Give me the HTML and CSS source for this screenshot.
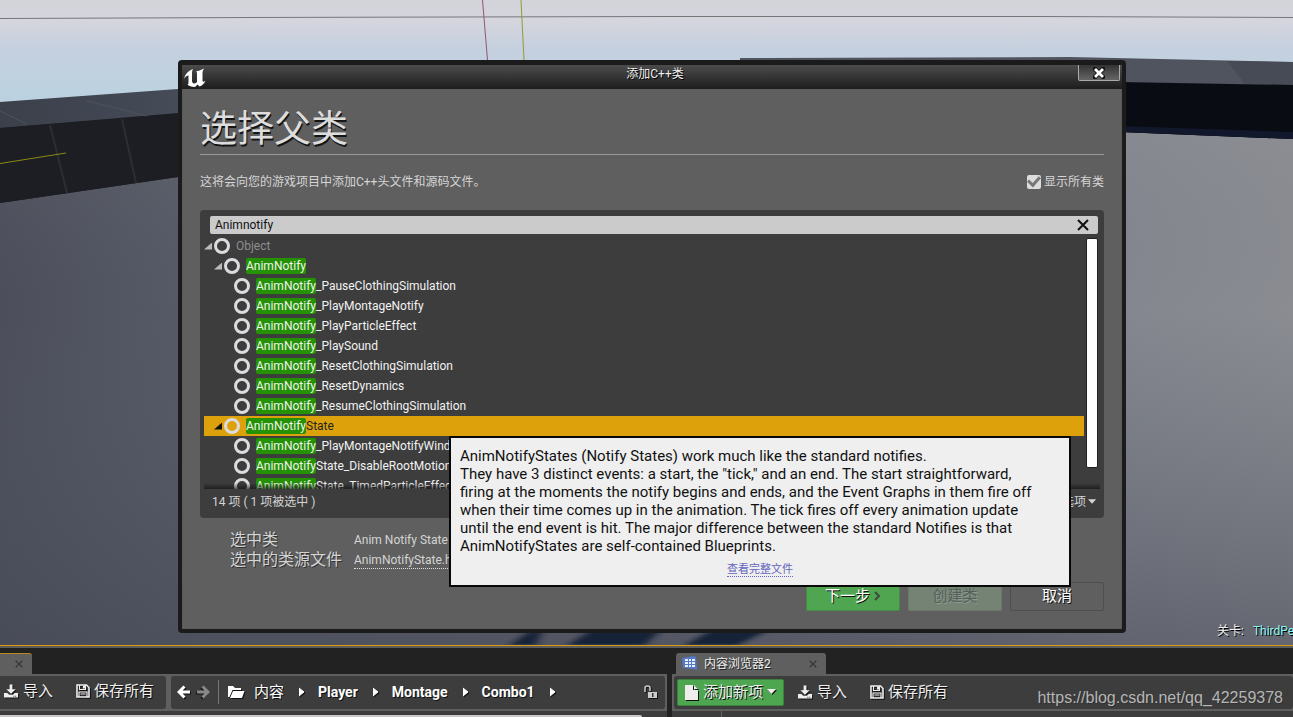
FILE: index.html
```html
<!DOCTYPE html>
<html lang="zh-CN">
<head>
<meta charset="utf-8">
<title>添加C++类</title>
<link rel="stylesheet" href="styles.css">
</head>
<body>
<svg class="defs" aria-hidden="true">
  <symbol id="i-import" viewBox="0 0 16 14"><path d="M6 0h3v5h3.500L7.500 10 2.500 5H6z"/><path d="M0 9h3.500l2 2h4l2-2H15v5H0z"/><path d="M10 12h1v1h-1zM12 12h1v1h-1z" fill="#333"/></symbol>
  <symbol id="i-save" viewBox="0 0 14 14"><path d="M1 1h9.500L13 3.500V13H1z" fill="none" stroke="currentColor" stroke-width="1.600"/><path d="M3.500 1v4.500h6V1M3 13V8h8v5" fill="none" stroke="currentColor" stroke-width="1.200"/><path d="M7 1.500h2v3H7zM4.500 9.500h5v1h-5z"/></symbol>
  <symbol id="i-arrow" viewBox="0 0 14 14"><path d="M13 7H3M7.500 1.500 2 7l5.500 5.500" fill="none" stroke="currentColor" stroke-width="3"/></symbol>
  <symbol id="i-x" viewBox="0 0 12 12"><path d="M1 1l10 10M11 1 1 11" fill="none" stroke="currentColor" stroke-width="2"/></symbol>
  <symbol id="i-crumb" viewBox="0 0 6 10"><path d="M0 1 5 5 0 9z" stroke="currentColor" stroke-linejoin="round"/></symbol>
  <symbol id="i-down" viewBox="0 0 10 6"><path d="M0 0h9L4.500 5z"/></symbol>
</svg>
<main class="editor">
  <section class="viewport">
    <svg class="scene" viewBox="0 0 1293 645" preserveAspectRatio="none" aria-hidden="true">
      <defs>
        <linearGradient id="sky" x2="0" y2="1"><stop offset="0" stop-color="#d3d4da"/><stop offset=".2" stop-color="#d4d5dd"/><stop offset=".45" stop-color="#c5d0df"/><stop offset="1" stop-color="#b9d2e0"/></linearGradient>
        <linearGradient id="floor"><stop offset="0" stop-color="#4c4f5b"/><stop offset=".14" stop-color="#565a66"/><stop offset=".5" stop-color="#646773"/><stop offset=".87" stop-color="#84878f"/><stop offset="1" stop-color="#8a8c92"/></linearGradient>
        <linearGradient id="shade" x2="0" y2="1"><stop offset="0" stop-color="#999" stop-opacity=".12"/><stop offset=".35" stop-color="#555b68" stop-opacity="0"/><stop offset="1" stop-color="#454855" stop-opacity=".55"/></linearGradient>
        <linearGradient id="top"><stop offset="0" stop-color="#3b404b"/><stop offset="1" stop-color="#454b57"/></linearGradient>
        <filter id="soft"><feGaussianBlur stdDeviation="4 1"/></filter>
      </defs>
      <rect width="1293" height="110" fill="url(#sky)"/>
      <path d="M0 203 178 177 1125 132 1293 139V645H0z" fill="url(#floor)"/>
      <path d="M0 203 178 177 1125 132 1293 139V645H0z" fill="url(#shade)"/>
      <path d="M0 102 178 89v25L0 128z" fill="url(#top)"/>
      <path d="M0 128 178 113v64L0 203z" fill="#1d1e23"/>
      <path d="M0 111 27 124M87 101 147 116" stroke="#4d525d" fill="none"/>
      <path d="M50 125 67 193M122 119 136 183" stroke="#2c2e35" stroke-width="2" fill="none"/>
      <path d="M0 163.500 66 153" stroke="#8a8a10"/>
      <path d="M740 58 1070 57 1293 62V86L1125 83 740 75z" fill="#50545e"/>
      <path d="M1227 61 1293 62V86L1245 84z" fill="#474b56"/>
      <path d="M1120 82 1293 85V139L1120 132z" fill="#090c12"/>
      <path d="M1120 126 1293 132V139L1120 132z" fill="#12182b"/>
      <path d="M0 18.500 252 17.500 660 16.500H1040L1293 17.500" stroke="#77777a" fill="none"/>
      <path d="M482.500 0 487.500 60" stroke="#8b5872"/><path d="M521 0 524 60" stroke="#969832"/>
      <path d="M510 645 530 631H542L536 645zM568 645 590 631H660L645 645zM685 645 710 631H767L738 645z" fill="#182039" filter="url(#soft)"/>
    </svg>
    <p class="level"><span>关卡:</span><span class="level-name">ThirdPersonExampleMap</span></p>
  </section>

  <section class="docks">
    <div class="dock dock-left">
      <div class="tabs"><div class="tab tab-cut"><button class="tab-close" aria-label="关闭"><svg width="8" height="8"><use href="#i-x"/></svg></button></div></div>
      <div class="bars">
        <div class="bar bar-file">
          <button class="tool"><svg width="15" height="14"><use href="#i-import"/></svg>导入</button>
          <button class="tool"><svg width="14" height="14"><use href="#i-save"/></svg>保存所有</button>
        </div>
        <nav class="bar bar-path">
          <button class="nav" aria-label="后退"><svg width="14" height="14"><use href="#i-arrow"/></svg></button>
          <button class="nav nav-off" aria-label="前进"><svg class="flip" width="14" height="14"><use href="#i-arrow"/></svg></button>
          <span class="rule"></span>
          <svg class="folder" width="17" height="14" viewBox="0 0 17 14"><path d="M0 12V1h5l2 2h6v2H4.500L1.500 12zM5 6h11.500L14 13H2z"/></svg>
          <a class="crumb crumb-root" href="#">内容</a><svg class="sep" width="6" height="10"><use href="#i-crumb"/></svg>
          <a class="crumb" href="#">Player</a><svg class="sep" width="6" height="10"><use href="#i-crumb"/></svg>
          <a class="crumb" href="#">Montage</a><svg class="sep" width="6" height="10"><use href="#i-crumb"/></svg>
          <a class="crumb" href="#">Combo1</a><svg class="sep" width="6" height="10"><use href="#i-crumb"/></svg>
          <button class="nav lock" aria-label="锁定"><svg width="14" height="14" viewBox="0 0 14 14"><path d="M1 7V3Q1 1 3.500 1T6 3V6" fill="none" stroke="currentColor" stroke-width="1.500"/><path d="M4 7h9v6H4z"/><path d="M8 8h1.500v4H8z" fill="#333"/></svg></button>
        </nav>
      </div>
      <div class="next"><span class="next-line"></span></div>
    </div>
    <div class="dock dock-right">
      <div class="tabs">
        <div class="tab tab-full">
          <svg width="16" height="15" viewBox="0 0 16 15"><path d="M0 2 12 0 14 1 15 14 12 13 1 12z" fill="#5578c8"/><path d="M3 3h3v2H3zM7 3h2v2H7zM10 3h3v2h-3zM3 6h3v2H3zM7 6h2v2H7zM10 6h3v2h-3zM3 9h3v2H3zM7 9h2v2H7zM10 9h3v2h-3z" fill="#e8efff"/></svg>
          <span class="tab-name">内容浏览器2</span>
          <button class="tab-close" aria-label="关闭"><svg width="8" height="8"><use href="#i-x"/></svg></button>
        </div>
      </div>
      <div class="bars">
        <div class="bar bar-add">
          <button class="tool add"><svg width="14" height="15" viewBox="0 0 14 15"><path d="M0 0h8v5h5v10H0zM9 0l4 4H9z"/></svg>添加新项<svg width="10" height="6"><use href="#i-down"/></svg></button>
          <button class="tool"><svg width="15" height="14"><use href="#i-import"/></svg>导入</button>
          <button class="tool"><svg width="14" height="14"><use href="#i-save"/></svg>保存所有</button>
        </div>
      </div>
      <div class="next"><span class="next-split"></span></div>
    </div>
  </section>

  <section class="dialog" role="dialog" aria-labelledby="dialog-title">
    <header class="titlebar">
      <svg class="logo" width="24" height="20" viewBox="0 0 24 20"><path d="M1 11C2 6 5 3 10 1c-1 2-1 3-1 5v7c0 1.500 1 2.500 2 2.500s2-.5 3-1.500V6c0-1.500 0-2-1-2.500C15 3 18 2 21 0.500c-1 1.500-1.500 3-1.500 5v7c0 1.500 1 1.500 3 .2C21 16 19 17.500 16.500 18.500L14.500 16.500 12 19C8 19 6 18 4.500 16.500 5.500 16 5.500 15.500 5.500 14V7.500C3.500 7.500 2.200 9 1 11z"/></svg>
      <h1 id="dialog-title" class="title">添加C++类</h1>
      <button class="close" aria-label="关闭"><svg width="12" height="12" viewBox="0 0 12 12"><path d="M2 2l8 8M10 2 2 10" stroke="#111" stroke-width="4.500" stroke-linecap="square"/><path d="M2 2l8 8M10 2 2 10" stroke="#fff" stroke-width="2.800"/></svg></button>
    </header>
    <div class="body">
      <h2 class="heading">选择父类</h2>
      <div class="intro">
        <p>这将会向您的游戏项目中添加C++头文件和源码文件。</p>
        <label class="check"><input type="checkbox" checked>显示所有类</label>
      </div>
      <div class="panel">
        <div class="search">
          <input type="text" value="Animnotify" aria-label="搜索">
          <button aria-label="清除"><svg width="12" height="12"><use href="#i-x"/></svg></button>
        </div>
        <div class="list">
          <ul class="tree">
            <li class="row"><i class="twist"></i><i class="ring"></i><span class="dim">Object</span></li>
            <li class="row level-1"><i class="twist"></i><i class="ring"></i><span><mark>AnimNotify</mark></span></li>
            <li class="row level-2"><i class="ring"></i><span><mark>AnimNotify</mark>_PauseClothingSimulation</span></li>
            <li class="row level-2"><i class="ring"></i><span><mark>AnimNotify</mark>_PlayMontageNotify</span></li>
            <li class="row level-2"><i class="ring"></i><span><mark>AnimNotify</mark>_PlayParticleEffect</span></li>
            <li class="row level-2"><i class="ring"></i><span><mark>AnimNotify</mark>_PlaySound</span></li>
            <li class="row level-2"><i class="ring"></i><span><mark>AnimNotify</mark>_ResetClothingSimulation</span></li>
            <li class="row level-2"><i class="ring"></i><span><mark>AnimNotify</mark>_ResetDynamics</span></li>
            <li class="row level-2"><i class="ring"></i><span><mark>AnimNotify</mark>_ResumeClothingSimulation</span></li>
            <li class="row level-1 selected"><i class="twist"></i><i class="ring"></i><span><mark>AnimNotify</mark>State</span></li>
            <li class="row level-2"><i class="ring"></i><span><mark>AnimNotify</mark>_PlayMontageNotifyWindow</span></li>
            <li class="row level-2"><i class="ring"></i><span><mark>AnimNotify</mark>State_DisableRootMotion</span></li>
            <li class="row level-2"><i class="ring"></i><span><mark>AnimNotify</mark>State_TimedParticleEffect</span></li>
          </ul>
          <div class="track"><div class="thumb"></div></div>
        </div>
        <div class="status"><span>14 项 ( 1 项被选中 )</span><button class="options">视图选项<svg width="9" height="6"><use href="#i-down"/></svg></button></div>
      </div>
      <dl class="facts">
        <dt>选中类</dt><dd>Anim Notify State</dd>
        <dt>选中的类源文件</dt><dd><a href="#">AnimNotifyState.h</a></dd>
      </dl>
      <div class="actions">
        <button class="btn go">下一步<svg width="7" height="10" viewBox="0 0 7 10"><path d="M1 1l4 4-4 4" fill="none" stroke="#3c4a3c" stroke-width="2"/></svg></button>
        <button class="btn off" disabled>创建类</button>
        <button class="btn">取消</button>
      </div>
    </div>
    <aside class="tooltip" role="tooltip">
      <p>AnimNotifyStates (Notify States) work much like the standard notifies.<br>They have 3 distinct events: a start, the "tick," and an end. The start straightforward,<br>firing at the moments the notify begins and ends, and the Event Graphs in them fire off<br>when their time comes up in the animation. The tick fires off every animation update<br>until the end event is hit. The major difference between the standard Notifies is that<br>AnimNotifyStates are self-contained Blueprints.</p>
      <a href="#">查看完整文件</a>
    </aside>
  </section>
  <p class="watermark">https://blog.csdn.net/qq_42259378</p>
</main>
</body>
</html>
```
FILE: styles.css
```css
* { box-sizing: border-box; }
body { margin: 0; background: #222; color: #eee; font: 12px/16px Roboto, "Noto Sans CJK SC", sans-serif; }
p, h1, h2, ul, dl, dd { margin: 0; padding: 0; font-weight: 400; }
button { border: 0; padding: 0; background: none; color: inherit; font: inherit; }
svg { display: block; flex: none; fill: currentColor; }
.defs { position: absolute; width: 0; height: 0; }

.editor { position: relative; display: flex; flex-direction: column; height: 100vh; overflow: hidden; }
.viewport { position: relative; flex: 1; min-height: 0; border-bottom: 1px solid #d99c12; }
.scene { width: 100%; height: 100%; }
.level { position: absolute; right: 0; bottom: 6px; display: flex; gap: 9px; width: 76px; overflow: hidden; white-space: nowrap; text-shadow: 1px 1px #000; }
.level-name { color: #8ff5f2; }

/* Docked content browsers */
.docks { display: flex; gap: 5px; border-top: 2px solid #5c5c5c; }
.dock { min-width: 0; }
.dock-left { flex: 667; }
.dock-right { flex: 621; }
.tabs { display: flex; align-items: flex-end; height: 26px; padding-left: 4px; }
.dock-left .tabs { padding-left: 0; }
.tab { display: flex; align-items: center; height: 21px; padding: 0 9px 0 6px; background: #5f5f5f; border-radius: 3px 3px 0 0; text-shadow: 1px 1px #222; }
.tab-cut { justify-content: flex-end; width: 32px; border-top: 1px solid #b58a1d; border-top-left-radius: 0; }
.tab-full { width: 150px; gap: 6px; }
.tab-name { flex: 1; }
.tab-close { color: #393939; }
.bars { display: flex; gap: 5px; padding: 2px; background: #5f5f5f; }
.dock-left .bars { padding-left: 0; }
.dock-right .bars { padding-right: 0; }
.bar { display: flex; align-items: center; height: 33px; padding-bottom: 2px; background: #3d3d3d; border-radius: 3px; white-space: nowrap; }
.bar-file { gap: 23px; width: 166px; padding-left: 4px; border-radius: 0 3px 3px 0; }
.bar-path { flex: 1; padding-left: 6px; }
.bar-add { flex: 1; gap: 23px; padding: 0 0 0 3px; }
.tool { display: flex; align-items: center; gap: 4px; height: 27px; padding-bottom: 1px; font-size: 15px; line-height: 20px; text-shadow: 1px 1px #111; }
.tool svg, .nav svg, .folder, .sep { filter: drop-shadow(1px 1px #111); }
.add { width: 107px; margin-right: -9px; padding: 0 7px 1px; background: #4fa650; border: 1px solid #3a833b; border-radius: 2px; }
.nav { margin-right: 5px; color: #fff; }
.nav-off { color: #888; }
.flip { transform: scaleX(-1); }
.rule { width: 1px; height: 24px; margin: 0 9px 0 3px; background: #777; }
.folder { margin-right: 9px; color: #fff; }
.crumb { color: #fff; font-size: 14px; line-height: 20px; font-weight: 700; text-decoration: none; text-shadow: 1px 1px #111; }
.crumb-root { font-size: 15px; font-weight: 400; }
.sep { margin: 0 13px 0 15px; color: #fff; }
.lock { margin: 0 7px 0 auto; color: #ccc; }
.next { display: flex; height: 6px; background: #3d3d3d; }
.next-line { align-self: flex-end; width: 642px; height: 2px; background: #cbc9c9; border-top-right-radius: 2px; }
.next-split { width: 1px; margin-left: 49px; background: #666; }

/* Add class dialog */
.dialog { position: absolute; left: 178px; right: 167px; top: 60px; background: #5f5f5f; border: 4px solid #1b1b1b; border-top-width: 5px; border-radius: 4px; box-shadow: inset 0 0 1px #333; }
.titlebar { display: grid; grid-template-columns: 1fr auto 1fr; height: 24px; padding-left: 6px; background: linear-gradient(#4c4c4c, #1d1d1d); }
.logo { margin: 3px 0 0 -5px; color: #fff; }
.title { font-size: 12px; line-height: 18px; text-shadow: 1px 1px #000; }
.close { display: grid; place-items: center; justify-self: end; width: 42px; height: 16px; margin-right: 2px; border: 1px solid #aaa; border-top-width: 0; border-radius: 0 0 2px 2px; background: linear-gradient(#333, #656565); }
.body { padding: 16px 18px 18px; }
.heading { height: 50px; padding-top: 2px; border-bottom: 1px solid #999; color: #ddd; font-size: 37px; line-height: 46px; text-shadow: 1px 2px #151515; }
.intro { display: flex; justify-content: space-between; align-items: center; height: 55px; padding-bottom: 2px; color: #d5d5d5; }
.check { display: flex; align-items: center; gap: 3px; }
.check input { appearance: none; width: 14px; height: 14px; margin: 0; border-radius: 2px; background: #dcdcdc; display: grid; place-items: center; }
.check input::after { content: ""; width: 9px; height: 5px; border: solid #777; border-width: 0 0 3px 3px; transform: rotate(-48deg); margin-bottom: 3px; }
.panel { height: 308px; padding: 6px 4px 0; background: #3d3d3d; border-radius: 4px; }
.search { display: flex; align-items: center; height: 18px; margin: 0 2px 2px 6px; padding: 0 9px 0 5px; background: #cbcbcb; border-radius: 2px; color: #111; }
.search input { flex: 1; border: 0; padding: 0; background: none; outline: 0; color: #111; font: inherit; }
.list { position: relative; display: flex; gap: 2px; height: 253px; overflow: hidden; }
.list::after { content: ""; position: absolute; inset: auto 0 0; height: 6px; background: linear-gradient(#0000, #111a); }
.tree { flex: 1; list-style: none; }
.row { display: flex; align-items: center; height: 20px; color: #f2f2f2; white-space: nowrap; }
.level-1 { padding-left: 10px; }
.level-2 { padding-left: 30px; }
.twist { width: 8px; height: 7px; margin-right: 2px; background: #bbb; clip-path: polygon(100% 0, 100% 100%, 0 100%); }
.ring { width: 16px; height: 16px; margin-right: 6px; border: 3px solid #dcdce0; border-radius: 50%; }
.dim { color: #8d8d8d; }
mark { padding: 1px 0; background: #249204; border-radius: 2px; color: #f2f2f2; }
.selected { background: #dda20b; color: #222; }
.selected .twist { background: #111; }
.track { width: 14px; padding: 2px 2px 2px 0; }
.thumb { height: 230px; border: 1px solid #222; border-radius: 2px; background: #fff; }
.status { display: flex; justify-content: space-between; align-items: center; height: 26px; padding: 0 3px 0 8px; color: #d4d4d4; }
.options { display: flex; align-items: center; gap: 2px; }
.facts { display: grid; grid-template-columns: 124px auto; padding: 12px 0 0 30px; color: #d4d4d4; line-height: 20px; }
.facts dt { font-size: 16px; text-shadow: 1px 1px #333; }
.facts a { display: inline-block; line-height: 15px; color: inherit; text-decoration: none; border-bottom: 1px dotted #ddd; }
.actions { display: flex; justify-content: flex-end; gap: 8px; padding-top: 12px; }
.btn { display: flex; align-items: center; justify-content: center; gap: 4px; width: 94px; height: 29px; padding-bottom: 2px; border: 1px solid #4e4e4e; border-radius: 2px; color: #fff; font-size: 15px; text-shadow: 1px 1px #111; }
.go { background: #50a650; border-color: #458d45; }
.off { background: #748374; border-color: #6b7b6b; color: #53605a; text-shadow: 1px 1px #8f9a8f; }
.tooltip { position: absolute; left: 267px; top: 371px; min-width: 622px; padding: 9px 9px 8px; border: 2px solid #080808; background: #efefef; color: #111; font-size: 15px; line-height: 18px; text-align: center; white-space: nowrap; }
.tooltip p { margin-bottom: 4px; text-align: left; }
.tooltip a { display: inline-block; color: #6464c0; font-size: 11px; line-height: 13px; text-decoration: none; border-bottom: 1px dotted #6464c0; }
.watermark { position: absolute; right: 10px; bottom: 9px; color: #b5b5b5; font: 16px/20px "Liberation Sans", Arial, sans-serif; text-shadow: 1px 1px #333; }
```
